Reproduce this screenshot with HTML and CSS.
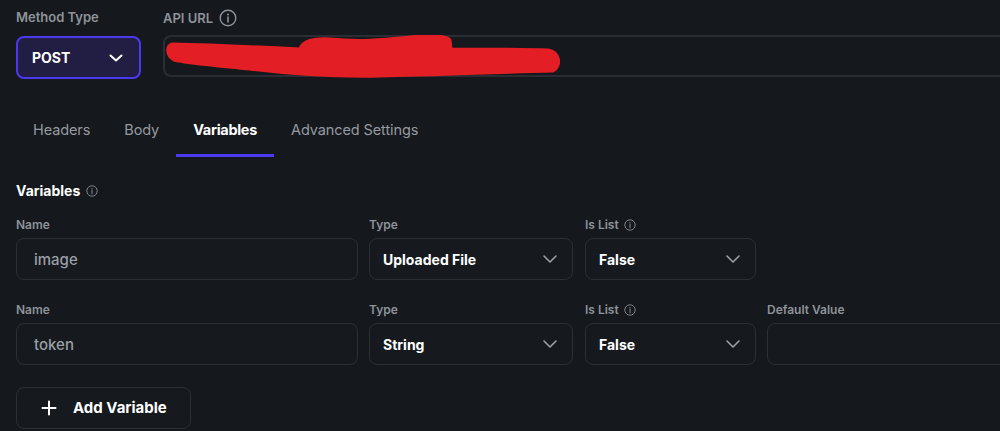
FILE: index.html
```html
<!DOCTYPE html>
<html>
<head>
<meta charset="utf-8">
<link rel="stylesheet" href="styles.css">
</head>
<body>
<div class="top">
  <div class="field method-field">
    <div class="top-label">Method Type</div>
    <div class="method-box">
      <span>POST</span>
      <svg class="chev" width="16" height="10" viewBox="0 0 16 10"><path d="M2.5 2.5 L8 7.5 L13.5 2.5" fill="none" stroke="#ffffff" stroke-width="2" stroke-linecap="round" stroke-linejoin="round"/></svg>
    </div>
  </div>
  <div class="field url-field">
    <div class="top-label url-label">API URL
      <svg class="info big" width="18" height="18" viewBox="0 0 18 18"><circle cx="9" cy="9" r="7.8" fill="none" stroke="#8e939a" stroke-width="1.4"/><circle cx="9" cy="5.4" r="1" fill="#8e939a"/><path d="M9 8 V13" stroke="#8e939a" stroke-width="1.6" stroke-linecap="round"/></svg>
    </div>
    <div class="url-box">
      <svg class="redact" width="420" height="45" viewBox="163 35 420 45"><path d="M172 44 C220 45 260 47 300 49 C302 42 310 38 330 39 C360 42 380 40 410 37 C430 35 446 35 450 40 L451 49 C490 49 520 49 548 50 C560 52 562 66 553 71 C500 72 440 75 380 76 C330 77 290 74 250 69 C210 65 185 63 174 60 C166 56 166 46 172 44 Z" fill="#e31e24" stroke="#e31e24" stroke-width="3" stroke-linejoin="round"/></svg>
    </div>
  </div>
</div>

<div class="tabs">
  <div class="tab">Headers</div>
  <div class="tab">Body</div>
  <div class="tab active">Variables</div>
  <div class="tab">Advanced Settings</div>
</div>

<div class="section-title">Variables
  <svg class="info" width="12" height="12" viewBox="0 0 12 12"><circle cx="6" cy="6" r="5.2" fill="none" stroke="#7d828a" stroke-width="1"/><circle cx="6" cy="3.7" r="0.7" fill="#7d828a"/><path d="M6 5.4 V8.8" stroke="#7d828a" stroke-width="1.1" stroke-linecap="round"/></svg>
</div>

<div class="row first">
  <div class="col name-col">
    <div class="label">Name</div>
    <div class="input"><span class="value">image</span></div>
  </div>
  <div class="col type-col">
    <div class="label">Type</div>
    <div class="select"><span>Uploaded File</span><svg class="chev" width="16" height="10" viewBox="0 0 16 10"><path d="M2 2 L8 8 L14 2" fill="none" stroke="#9ca1a8" stroke-width="1.6" stroke-linecap="round" stroke-linejoin="round"/></svg></div>
  </div>
  <div class="col list-col">
    <div class="label">Is List <svg class="info" width="12" height="12" viewBox="0 0 12 12"><circle cx="6" cy="6" r="5.2" fill="none" stroke="#7d828a" stroke-width="1"/><circle cx="6" cy="3.7" r="0.7" fill="#7d828a"/><path d="M6 5.4 V8.8" stroke="#7d828a" stroke-width="1.1" stroke-linecap="round"/></svg></div>
    <div class="select"><span>False</span><svg class="chev" width="16" height="10" viewBox="0 0 16 10"><path d="M2 2 L8 8 L14 2" fill="none" stroke="#9ca1a8" stroke-width="1.6" stroke-linecap="round" stroke-linejoin="round"/></svg></div>
  </div>
</div>

<div class="row second">
  <div class="col name-col">
    <div class="label">Name</div>
    <div class="input"><span class="value">token</span></div>
  </div>
  <div class="col type-col">
    <div class="label">Type</div>
    <div class="select"><span>String</span><svg class="chev" width="16" height="10" viewBox="0 0 16 10"><path d="M2 2 L8 8 L14 2" fill="none" stroke="#9ca1a8" stroke-width="1.6" stroke-linecap="round" stroke-linejoin="round"/></svg></div>
  </div>
  <div class="col list-col">
    <div class="label">Is List <svg class="info" width="12" height="12" viewBox="0 0 12 12"><circle cx="6" cy="6" r="5.2" fill="none" stroke="#7d828a" stroke-width="1"/><circle cx="6" cy="3.7" r="0.7" fill="#7d828a"/><path d="M6 5.4 V8.8" stroke="#7d828a" stroke-width="1.1" stroke-linecap="round"/></svg></div>
    <div class="select"><span>False</span><svg class="chev" width="16" height="10" viewBox="0 0 16 10"><path d="M2 2 L8 8 L14 2" fill="none" stroke="#9ca1a8" stroke-width="1.6" stroke-linecap="round" stroke-linejoin="round"/></svg></div>
  </div>
  <div class="col default-col">
    <div class="label">Default Value</div>
    <div class="input"></div>
  </div>
</div>

<button class="add-btn"><svg width="16" height="16" viewBox="0 0 16 16"><path d="M8 1.5 V14.5 M1.5 8 H14.5" stroke="#ffffff" stroke-width="2" stroke-linecap="round"/></svg><span>Add Variable</span></button>
</body>
</html>
```

FILE: styles.css
```css
html, body {
  margin: 0;
  height: 100%;
}
body {
  background: #15181c;
  font-family: Inter, "Noto Sans", sans-serif;
  color: #ffffff;
  padding: 9px 16px 0;
  box-sizing: border-box;
  overflow: hidden;
}
.top {
  display: flex;
  gap: 22px;
}
.method-field {
  width: 125px;
  flex: none;
}
.url-field {
  width: 860px;
  flex: none;
}
.top-label {
  font-size: 13px;
  font-weight: 600;
  color: #8e939a;
  line-height: 16px;
  height: 16px;
  margin-bottom: 11px;
  display: flex;
  align-items: center;
  gap: 6px;
}
.url-label {
  margin-top: 1px;
  margin-bottom: 9px;
}
.method-box {
  box-sizing: border-box;
  height: 43px;
  border: 2px solid #4b39ef;
  border-radius: 8px;
  background: #221d42;
  display: flex;
  align-items: center;
  justify-content: space-between;
  padding: 0 15px 0 14px;
  font-size: 14px;
  font-weight: 700;
}
.url-box {
  position: relative;
  box-sizing: border-box;
  height: 42px;
  border: 2px solid #2a2d34;
  border-radius: 8px;
  background: #15181c;
}
.redact {
  position: absolute;
  left: -2px;
  top: -2px;
}
.tabs {
  display: flex;
  margin-top: 22px;
  height: 56px;
}
.tab {
  box-sizing: border-box;
  padding: 4px 17px 0;
  display: flex;
  align-items: center;
  font-size: 14.5px;
  letter-spacing: -0.1px;
  color: #959aa1;
  border-bottom: 3px solid transparent;
}
.tab.active {
  color: #ffffff;
  font-weight: 700;
  letter-spacing: -0.3px;
  border-bottom-color: #4b39ef;
}
.section-title {
  margin-top: 25px;
  line-height: 18px;
  height: 18px;
  font-size: 14px;
  font-weight: 700;
  display: flex;
  align-items: center;
  gap: 6px;
}
.row {
  display: flex;
  gap: 11px;
}
.row.first {
  margin-top: 18px;
}
.row.second {
  margin-top: 23px;
}
.label {
  font-size: 12px;
  font-weight: 600;
  color: #8e939a;
  line-height: 14px;
  height: 14px;
  margin-bottom: 6px;
  display: flex;
  align-items: center;
  gap: 5px;
}
.name-col { width: 342px; flex: none; }
.type-col { width: 204px; flex: none; }
.list-col { width: 171px; flex: none; margin-left: 1px; }
.default-col { width: 260px; flex: none; }
.input, .select {
  box-sizing: border-box;
  height: 42px;
  border: 1px solid #2c2f36;
  border-radius: 8px;
  background: #16191d;
  display: flex;
  align-items: center;
}
.input {
  padding: 0 17px;
}
.value {
  font-size: 15px;
  font-weight: 500;
  color: #9a9fa6;
}
.select {
  justify-content: space-between;
  padding: 0 14px 0 13px;
  font-size: 14px;
  font-weight: 700;
  color: #ffffff;
}
.add-btn {
  margin-top: 22px;
  box-sizing: border-box;
  width: 175px;
  height: 42px;
  border: 1px solid #2c2f36;
  border-radius: 8px;
  background: #16191d;
  display: flex;
  align-items: center;
  gap: 16px;
  padding: 0 0 1px 24px;
  font-family: Inter, "Noto Sans", sans-serif;
  font-size: 15px;
  font-weight: 700;
  color: #ffffff;
}
```
